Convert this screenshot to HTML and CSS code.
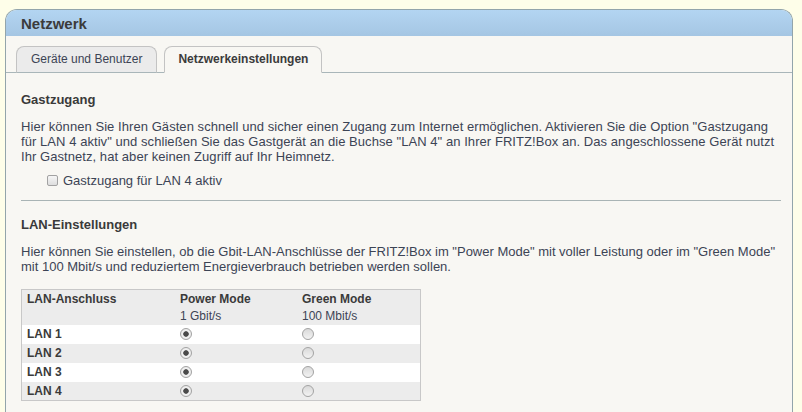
FILE: index.html
```html
<!DOCTYPE html>
<html lang="de">
<head>
<meta charset="utf-8">
<title>Netzwerk</title>
<link rel="stylesheet" href="styles.css">
</head>
<body>
<div class="panel">
  <div class="panel-header">Netzwerk</div>
  <div class="tabs">
    <div class="tab">Geräte und Benutzer</div>
    <div class="tab tab-active">Netzwerkeinstellungen</div>
  </div>
  <div class="content">
    <h2 class="heading">Gastzugang</h2>
    <p class="text text-wide">Hier können Sie Ihren Gästen schnell und sicher einen Zugang zum Internet ermöglichen. Aktivieren Sie die Option "Gastzugang für LAN 4 aktiv" und schließen Sie das Gastgerät an die Buchse "LAN 4" an Ihrer FRITZ!Box an. Das angeschlossene Gerät nutzt Ihr Gastnetz, hat aber keinen Zugriff auf Ihr Heimnetz.</p>
    <label class="check"><input type="checkbox" class="cb"><span>Gastzugang für LAN 4 aktiv</span></label>
    <hr class="rule">
    <h2 class="heading heading-second">LAN-Einstellungen</h2>
    <p class="text">Hier können Sie einstellen, ob die Gbit-LAN-Anschlüsse der FRITZ!Box im "Power Mode" mit voller Leistung oder im "Green Mode" mit 100 Mbit/s und reduziertem Energieverbrauch betrieben werden sollen.</p>
    <table class="lan-table">
      <tr class="head1">
        <th class="c1">LAN-Anschluss</th>
        <th class="c2">Power Mode</th>
        <th class="c3">Green Mode</th>
      </tr>
      <tr class="head2">
        <td></td>
        <td>1 Gbit/s</td>
        <td>100 Mbit/s</td>
      </tr>
      <tr class="row row-white">
        <th>LAN 1</th>
        <td><input type="radio" class="rb" name="lan1" checked></td>
        <td><input type="radio" class="rb" name="lan1"></td>
      </tr>
      <tr class="row row-grey">
        <th>LAN 2</th>
        <td><input type="radio" class="rb" name="lan2" checked></td>
        <td><input type="radio" class="rb" name="lan2"></td>
      </tr>
      <tr class="row row-white">
        <th>LAN 3</th>
        <td><input type="radio" class="rb" name="lan3" checked></td>
        <td><input type="radio" class="rb" name="lan3"></td>
      </tr>
      <tr class="row row-grey">
        <th>LAN 4</th>
        <td><input type="radio" class="rb" name="lan4" checked></td>
        <td><input type="radio" class="rb" name="lan4"></td>
      </tr>
    </table>
  </div>
</div>
</body>
</html>
```

FILE: styles.css
```css
html, body {
  margin: 0;
  padding: 0;
  overflow: hidden;
  height: 100%;
}
body {
  background: #fefee9;
  font-family: "Liberation Sans", Arial, sans-serif;
  color: #3c4455;
}
.panel {
  margin: 9px 0 0 5px;
  width: 786px;
  border: 1px solid #93a5ab;
  border-bottom: none;
  border-radius: 12px 12px 0 0;
  background: #f8f7f3;
  min-height: 420px;
}
.panel-header {
  height: 26px;
  line-height: 25px;
  padding: 1px 0 0 15px;
  box-sizing: border-box;
  font-size: 15px;
  font-weight: bold;
  color: #3b3b3b;
  background: linear-gradient(#b3d5f2, #a5c6e3);
  border-radius: 11px 11px 0 0;
}
.tabs {
  display: flex;
  gap: 7px;
  padding: 10px 0 0 10px;
  border-bottom: 1px solid #a9b6b9;
  height: 26px;
}
.tab {
  line-height: 24px;
  padding: 0 14px 1px 14px;
  box-sizing: border-box;
  height: 27px;
  border: 1px solid #c3c3c3;
  border-bottom: 1px solid #a9b6b9;
  border-radius: 8px 8px 0 0;
  background: #ebebeb;
  font-size: 12px;
  color: #3c4455;
  white-space: nowrap;
}
.tab-active {
  padding: 0 13px 1px 13px;
  background: #f8f7f3;
  border-bottom-color: #f8f7f3;
  font-weight: bold;
  color: #3b3b3b;
}
.content {
  padding: 19px 11px 20px 15px;
}
.heading {
  margin: 0;
  font-size: 13px;
  line-height: 15px;
  font-weight: bold;
  color: #3a3a3a;
}
.text {
  margin: 12px 0 0 0;
  font-size: 13px;
  line-height: 15px;
}
.text-wide {
  letter-spacing: 0.06px;
}
.check {
  display: flex;
  align-items: center;
  margin-top: 9px;
  padding-left: 26px;
  font-size: 13px;
  line-height: 15px;
}
.cb {
  -webkit-appearance: none;
  appearance: none;
  width: 11px;
  height: 11px;
  margin: 0 5px 0 0;
  border: 1px solid #a2a2a2;
  border-radius: 2px;
  background: linear-gradient(#f6f6f6, #dedede);
  box-sizing: border-box;
}
.rule {
  margin: 12px 0 0 0;
  border: none;
  border-top: 1px solid #a9b4b5;
  height: 0;
}
.heading-second {
  margin-top: 16px;
}
.lan-table {
  margin-top: 15px;
  width: 400px;
  border: 1px solid #c8c8c8;
  border-collapse: collapse;
  font-size: 12px;
}
.lan-table th,
.lan-table td {
  padding: 0 5px;
  text-align: left;
  vertical-align: middle;
  line-height: 14px;
}
.lan-table th {
  font-weight: bold;
  color: #3a3a3a;
}
.c1 { width: 143px; }
.c2 { width: 112px; }
.c3 { width: auto; }
.head1, .head2 {
  background: #ececec;
}
.head1 { height: 18px; }
.head2 { height: 17px; }
.row { height: 19px; }
.row-white { background: #ffffff; }
.row-grey { background: #ececec; }
.rb {
  -webkit-appearance: none;
  appearance: none;
  display: block;
  width: 12px;
  height: 12px;
  margin: 0;
  border: 1px solid #a3a3a3;
  border-radius: 50%;
  box-sizing: border-box;
  background: linear-gradient(#d9d9d9, #f2f2f2);
}
.rb:checked {
  background: radial-gradient(circle at center, #4a4a4a 0, #4a4a4a 2.4px, #f2f2f2 3.1px, #e2e2e2 100%);
}
```
